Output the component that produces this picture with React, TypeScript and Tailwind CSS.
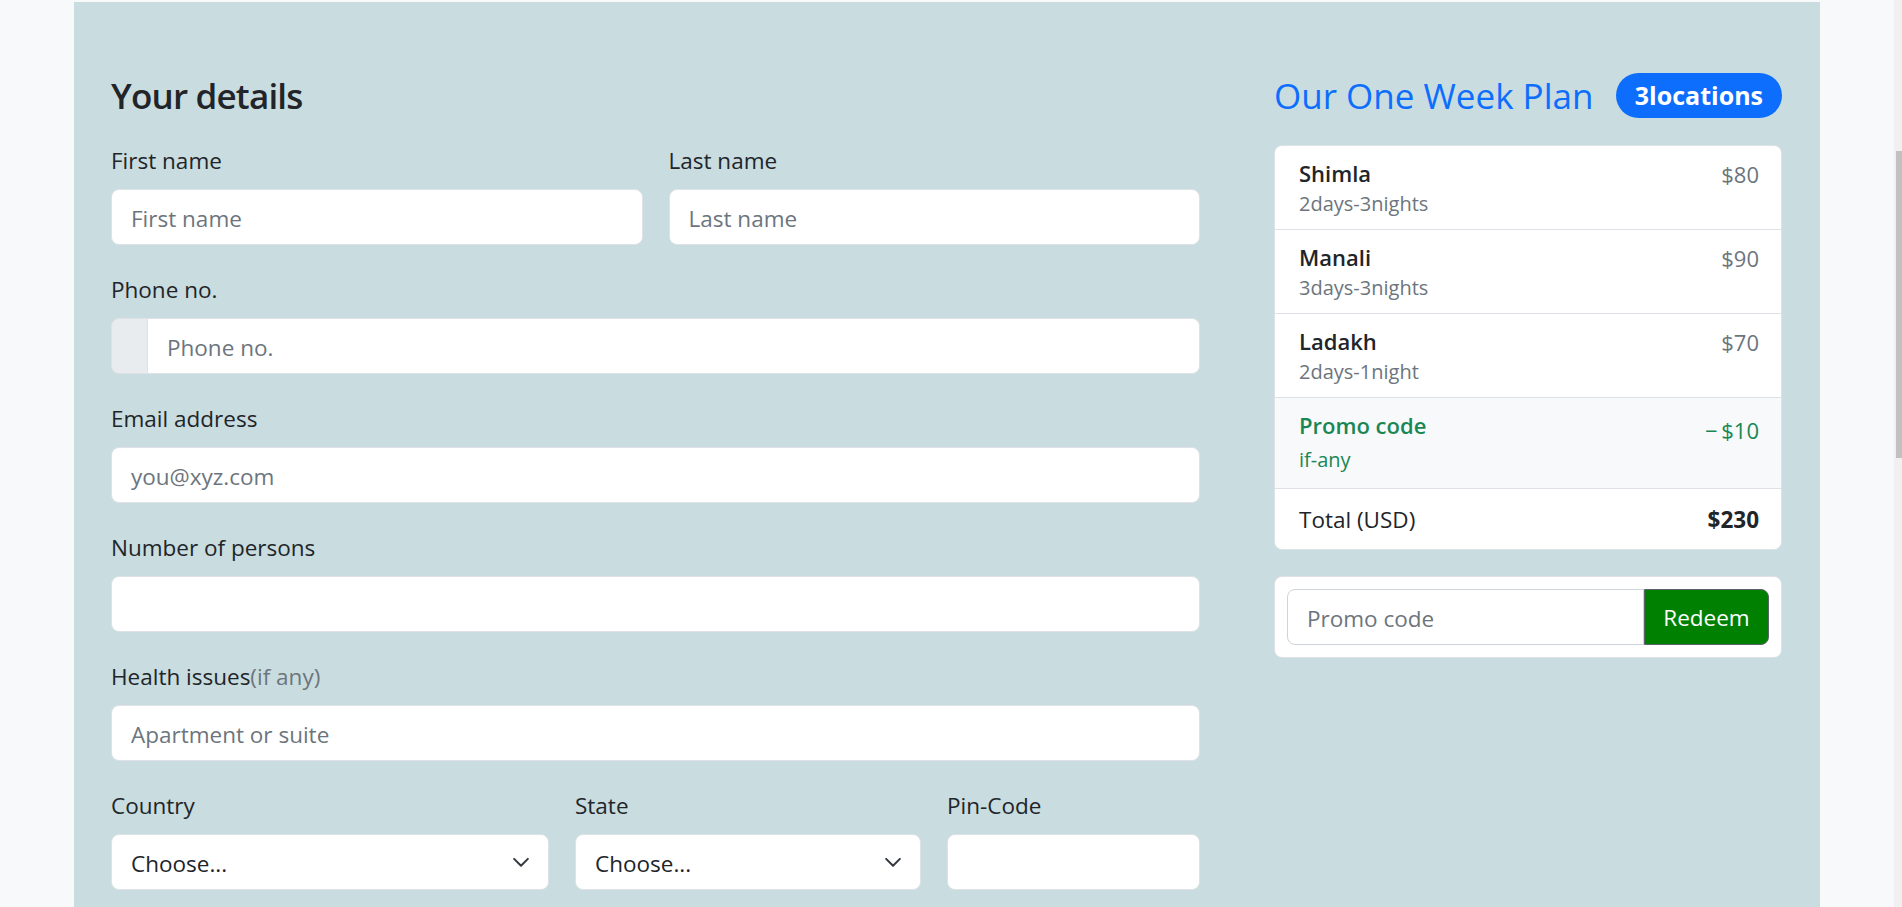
import React from 'react';

const Chevron = () => (
    <svg className="pointer-events-none absolute right-[18px] top-1/2 -translate-y-1/2" width="20" height="15" viewBox="0 0 16 12" fill="none">
        <path d="M2.5 3.5l5.5 5.5 5.5-5.5" stroke="#343a40" strokeWidth="1.6" strokeLinecap="round" strokeLinejoin="round" />
    </svg>
);

const inputCls = 'h-[56px] w-full rounded-[8px] border border-[#dee2e6] bg-white px-[19px] pt-[3px] text-[22.5px] text-[#212529] outline-none placeholder:text-[#6c757d]';
const labelCls = 'block text-[22.5px] leading-[32px] mb-[12px]';

const plan = [
    { name: 'Shimla', info: '2days-3nights', price: '$80' },
    { name: 'Manali', info: '3days-3nights', price: '$90' },
    { name: 'Ladakh', info: '2days-1night', price: '$70' },
];

export default function App() {
    return (
        <div className="flex h-[907px] overflow-hidden bg-[#f8f9fa] font-['Open_Sans',sans-serif] text-[#212529]">
            <div className="flex-1 px-[74px] pt-[2px]">
                <div className="flex gap-[74px] bg-[#c9dcdf] pl-[37px] pr-[38px] pt-[71px] pb-[80px]">
                    {/* Form */}
                    <div className="w-[1089px] shrink-0">
                        <h3 className="mb-[27px] text-[35px] font-semibold leading-[45px] tracking-[-0.8px]">Your details</h3>
                        <div className="flex flex-col gap-[29px]">
                            <div className="grid grid-cols-2 gap-x-[26px]">
                                <div>
                                    <label className={labelCls}>First name</label>
                                    <input className={inputCls} placeholder="First name" />
                                </div>
                                <div>
                                    <label className={labelCls}>Last name</label>
                                    <input className={inputCls} placeholder="Last name" />
                                </div>
                            </div>
                            <div>
                                <label className={labelCls}>Phone no.</label>
                                <div className="flex h-[56px]">
                                    <span className="w-[37px] shrink-0 rounded-l-[8px] border border-[#dee2e6] bg-[#e9ecef]"></span>
                                    <input className="h-[56px] flex-1 rounded-r-[8px] border border-l-0 border-[#dee2e6] bg-white px-[19px] pt-[3px] text-[22.5px] outline-none placeholder:text-[#6c757d]" placeholder="Phone no." />
                                </div>
                            </div>
                            <div>
                                <label className={labelCls}>Email address</label>
                                <input className={inputCls} placeholder="you@xyz.com" />
                            </div>
                            <div>
                                <label className={labelCls}>Number of persons</label>
                                <input className={inputCls} />
                            </div>
                            <div>
                                <label className={labelCls}>
                                    Health issues<span className="text-[#6c757d]">(if any)</span>
                                </label>
                                <input className={inputCls} placeholder="Apartment or suite" />
                            </div>
                            <div className="grid grid-cols-[438px_346px_253px] gap-x-[26px]">
                                <div>
                                    <label className={labelCls}>Country</label>
                                    <div className="relative">
                                        <select className={inputCls + ' appearance-none'}>
                                            <option>Choose...</option>
                                        </select>
                                        <Chevron />
                                    </div>
                                </div>
                                <div>
                                    <label className={labelCls}>State</label>
                                    <div className="relative">
                                        <select className={inputCls + ' appearance-none'}>
                                            <option>Choose...</option>
                                        </select>
                                        <Chevron />
                                    </div>
                                </div>
                                <div>
                                    <label className={labelCls}>Pin-Code</label>
                                    <input className={inputCls} />
                                </div>
                            </div>
                        </div>
                    </div>

                    {/* Plan summary */}
                    <div className="w-[508px] shrink-0">
                        <div className="mb-[27px] flex h-[45px] items-center justify-between">
                            <h4 className="text-[35px] font-medium leading-[45px] text-[#0d6efd]">Our One Week Plan</h4>
                            <span className="flex h-[45px] items-center rounded-full bg-[#0d6efd] px-[19px] text-[25px] font-bold text-white">3locations</span>
                        </div>
                        <ul className="overflow-hidden rounded-[8px] border border-[#dee2e6] bg-white">
                            {plan.map((p) => (
                                <li key={p.name} className="flex h-[84px] justify-between border-b border-[#dee2e6] pl-[24px] pr-[22px] pt-[14px]">
                                    <div>
                                        <h6 className="text-[22px] font-semibold leading-[27px]">{p.name}</h6>
                                        <small className="block text-[20px] leading-[34px] text-[#6c757d]">{p.info}</small>
                                    </div>
                                    <span className="text-[22px] leading-[29px] text-[#6c757d]">{p.price}</span>
                                </li>
                            ))}
                            <li className="flex h-[91px] justify-between border-b border-[#dee2e6] bg-[#f8f9fa] pl-[24px] pr-[22px] pt-[14px] text-[#198754]">
                                <div>
                                    <h6 className="text-[22px] font-semibold leading-[27px]">Promo code</h6>
                                    <small className="mt-[4px] block text-[20px] leading-[34px]">if-any</small>
                                </div>
                                <span className="pt-[4px] text-[22px] leading-[29px]">−&thinsp;$10</span>
                            </li>
                            <li className="flex h-[60px] justify-between pl-[24px] pr-[22px] pt-[15px] text-[22.5px] leading-[32px]">
                                <span>Total (USD)</span>
                                <strong>$230</strong>
                            </li>
                        </ul>
                        <form className="mt-[26px] rounded-[8px] border border-[#dee2e6] bg-white p-[12px]">
                            <div className="flex h-[56px]">
                                <input className="min-w-0 flex-1 rounded-l-[8px] border border-[#ced4da] bg-white px-[19px] pt-[3px] text-[22.5px] outline-none placeholder:text-[#6c757d]" placeholder="Promo code" />
                                <button type="button" className="w-[125px] rounded-r-[8px] border border-[#5c636a] bg-[#008000] pt-[2px] text-[22.5px] text-white">Redeem</button>
                            </div>
                        </form>
                    </div>
                </div>
            </div>
            <div className="w-[8px] bg-[#f0f0f0] pt-[151px]">
                <div className="ml-[2px] h-[307px] w-[6px] bg-[#c1c1c1]"></div>
            </div>
        </div>
    );
}
